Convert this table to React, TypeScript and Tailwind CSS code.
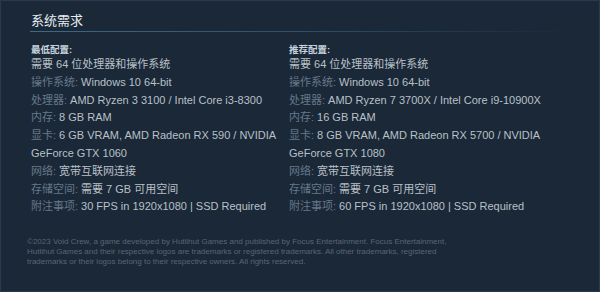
import React from "react";

type Row = { label?: string; value: string };

const minRows: Row[] = [
  { value: "需要 64 位处理器和操作系统" },
  { label: "操作系统:", value: "Windows 10 64-bit" },
  { label: "处理器:", value: "AMD Ryzen 3 3100 / Intel Core i3-8300" },
  { label: "内存:", value: "8 GB RAM" },
  { label: "显卡:", value: "6 GB VRAM, AMD Radeon RX 590 / NVIDIA GeForce GTX 1060" },
  { label: "网络:", value: "宽带互联网连接" },
  { label: "存储空间:", value: "需要 7 GB 可用空间" },
  { label: "附注事项:", value: "30 FPS in 1920x1080 | SSD Required" },
];

const recRows: Row[] = [
  { value: "需要 64 位处理器和操作系统" },
  { label: "操作系统:", value: "Windows 10 64-bit" },
  { label: "处理器:", value: "AMD Ryzen 7 3700X / Intel Core i9-10900X" },
  { label: "内存:", value: "16 GB RAM" },
  { label: "显卡:", value: "8 GB VRAM, AMD Radeon RX 5700 / NVIDIA GeForce GTX 1080" },
  { label: "网络:", value: "宽带互联网连接" },
  { label: "存储空间:", value: "需要 7 GB 可用空间" },
  { label: "附注事项:", value: "60 FPS in 1920x1080 | SSD Required" },
];

function Column({ title, rows }: { title: string; rows: Row[] }) {
  return (
    <div>
      <div className="text-[9.5px] font-bold text-[#c6d4df] leading-[12px]">{title}</div>
      <ul className="text-[11px] leading-[17.8px] text-[#b9c0c7]">
        {rows.map((r, i) => (
          <li key={i} className="pr-[4px]">
            {r.label && (
              <span className="inline-block leading-[17.8px] text-[#66788a] mr-[3px]">{r.label}</span>
            )}
            {r.value}
          </li>
        ))}
      </ul>
    </div>
  );
}

export default function App() {
  return (
    <div
      className="w-[600px] h-[292px] bg-[#1b2838] border border-[#2a3a4c] box-border overflow-hidden"
      style={{ fontFamily: '"Liberation Sans", Arial, "Noto Sans CJK SC", sans-serif' }}
    >
      <div className="pl-[29px] pr-[30px] pt-[12px]">
        <h2 className="text-[13px] leading-[16px] text-[#e6edf2] pl-[1px]">系统需求</h2>
        <div className="mt-[2px] h-px bg-gradient-to-r from-[#3c6a89] via-[#2e5068] to-[#1b2838]" />
        <div className="grid grid-cols-[258px_274px] pl-[1px] mt-[12px]">
          <Column title="最低配置:" rows={minRows} />
          <Column title="推荐配置:" rows={recRows} />
        </div>
        <div
          className="mt-[21px] -ml-[3px] text-[8px] leading-[10px] text-[#5a6673]"
          style={{ fontFamily: '"Liberation Sans", Arial, sans-serif' }}
        >
          ©2023 Void Crew, a game developed by Hutlihut Games and published by Focus Entertainment. Focus Entertainment,
          <br />
          Hutlihut Games and their respective logos are trademarks or registered trademarks. All other trademarks, registered
          <br />
          trademarks or their logos belong to their respective owners. All rights reserved.
        </div>
      </div>
    </div>
  );
}
